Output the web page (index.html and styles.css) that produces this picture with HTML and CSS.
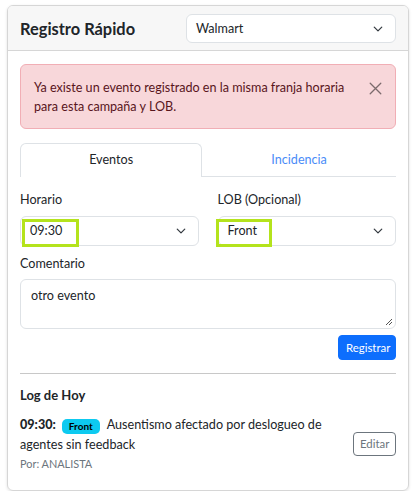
FILE: index.html
```html
<!DOCTYPE html>
<html lang="es">
<head>
<meta charset="utf-8">
<title>Registro Rápido</title>
<link rel="stylesheet" href="styles.css">
</head>
<body>
<div class="card">
  <div class="card-header">
    <h5 class="title">Registro Rápido</h5>
    <div class="select header-select">
      <span>Walmart</span>
      <svg class="chev" viewBox="0 0 16 16" width="12" height="12"><path d="M2 5l6 6 6-6" fill="none" stroke="#343a40" stroke-width="2" stroke-linecap="round" stroke-linejoin="round"/></svg>
    </div>
  </div>
  <div class="card-body">
    <div class="alert">
      <span class="alert-text">Ya existe un evento registrado en la misma franja horaria para esta campaña y LOB.</span>
      <svg class="close" viewBox="0 0 16 16" width="14" height="14"><path d="M1.5 1.5l13 13M14.5 1.5l-13 13" stroke="#000" stroke-width="1.6" stroke-linecap="round"/></svg>
    </div>

    <div class="tabs">
      <div class="tab active">Eventos</div>
      <div class="tab">Incidencia</div>
    </div>

    <div class="row">
      <div class="field">
        <label class="label">Horario</label>
        <div class="select-wrap">
          <div class="select">
            <span>09:30</span>
            <svg class="chev" viewBox="0 0 16 16" width="12" height="12"><path d="M2 5l6 6 6-6" fill="none" stroke="#343a40" stroke-width="2" stroke-linecap="round" stroke-linejoin="round"/></svg>
          </div>
          <span class="mark mark-time"></span>
        </div>
      </div>
      <div class="field">
        <label class="label">LOB (Opcional)</label>
        <div class="select-wrap">
          <div class="select">
            <span>Front</span>
            <svg class="chev" viewBox="0 0 16 16" width="12" height="12"><path d="M2 5l6 6 6-6" fill="none" stroke="#343a40" stroke-width="2" stroke-linecap="round" stroke-linejoin="round"/></svg>
          </div>
          <span class="mark mark-lob"></span>
        </div>
      </div>
    </div>

    <label class="label label-comment">Comentario</label>
    <div class="textarea">
      <span>otro evento</span>
      <svg class="grip" viewBox="0 0 8 8" width="8" height="8"><path d="M7 1L1 7M7 4L4 7" stroke="#555" stroke-width="1"/></svg>
    </div>

    <div class="actions">
      <button class="btn-primary">Registrar</button>
    </div>

    <div class="divider"></div>

    <div class="log-title">Log de Hoy</div>
    <div class="log-item">
      <div class="log-content">
        <div class="log-text"><strong class="log-time">09:30:</strong><span class="badge">Front</span>Ausentismo afectado por deslogueo de agentes sin feedback</div>
        <div class="log-by">Por: ANALISTA</div>
      </div>
      <button class="btn-outline">Editar</button>
    </div>
  </div>
</div>
</body>
</html>
```

FILE: styles.css
```css
* { box-sizing: border-box; }
html, body { margin: 0; padding: 0; background: #fff; }
body {
  font-family: Lato, "Noto Sans", sans-serif;
  font-size: 12.6px;
  line-height: 20px;
  color: #212529;
}
.card {
  margin: 5px 5px 0 7px;
  border: 1px solid #d6d6d6;
  border-radius: 6px;
  box-shadow: 0 1px 3px rgba(0,0,0,0.12);
  overflow: hidden;
}
.card-header {
  display: flex;
  align-items: center;
  justify-content: space-between;
  background: #f7f7f7;
  border-bottom: 1px solid #d6d6d6;
  padding: 8px 12px 7px 12px;
}
.title {
  margin: 0;
  font-size: 16.4px;
  font-weight: 700;
  line-height: 24px;
  color: #212529;
}
.select {
  display: flex;
  align-items: center;
  justify-content: space-between;
  height: 30px;
  border: 1px solid #dee2e6;
  border-radius: 6px;
  background: #fff;
  padding: 0 12px 0 9px;
}
.header-select { width: 210px; height: 29px; }
.chev { display: block; width: 10px; height: 10px; }
.card-body { padding: 13px 12px 18px 12px; }
.alert {
  display: flex;
  align-items: flex-start;
  justify-content: space-between;
  background: #f8d7da;
  border: 1px solid #f1aeb5;
  border-radius: 6px;
  color: #58151c;
  line-height: 19.2px;
  padding: 13px 12px 12px 13px;
}
.alert-text { flex: 1; padding-right: 8px; }
.close { flex: none; margin-top: 4px; margin-right: 1px; opacity: 0.5; width: 13px; height: 13px; }
.tabs {
  display: flex;
  margin-top: 14px;
  border-bottom: 1px solid #dee2e6;
}
.tab {
  flex: 1 1 auto;
  text-align: center;
  height: 34px;
  line-height: 32px;
  color: #4a8cf8;
  border: 1px solid transparent;
  border-bottom: none;
  border-top-left-radius: 6px;
  border-top-right-radius: 6px;
  margin-bottom: -1px;
}
.tab.active {
  color: #212529;
  border-color: #dee2e6;
  background: #fff;
}
.row {
  display: flex;
  gap: 19px;
  margin-top: 13px;
}
.field { flex: 1 1 0; min-width: 0; }
.label { display: block; margin-bottom: 6px; }
.select-wrap { position: relative; }
.mark {
  position: absolute;
  top: 3px;
  height: 28px;
  border: 3px solid #b4e31c;
  pointer-events: none;
}
.mark-time { left: 2px; width: 57px; }
.mark-lob { left: -2px; width: 56px; }
.label-comment { margin-top: 8px; margin-bottom: 5px; }
.textarea {
  position: relative;
  height: 50px;
  border: 1px solid #dee2e6;
  border-radius: 6px;
  padding: 6px 10px;
}
.grip { position: absolute; right: 2px; bottom: 2px; }
.actions {
  display: flex;
  justify-content: flex-end;
  margin-top: 6px;
}
.btn-primary {
  font-family: inherit;
  font-size: 11.4px;
  line-height: 17px;
  color: #fff;
  background: #0d6efd;
  border: 1px solid #0d6efd;
  border-radius: 4px;
  padding: 3px 7px;
  height: 25px;
  width: 58px;
}
.divider {
  margin-top: 13px;
  border-top: 1px solid #c8c8c8;
}
.log-title {
  margin-top: 11px;
  font-size: 13px;
  font-weight: 700;
}
.log-item {
  display: flex;
  align-items: center;
  justify-content: space-between;
  margin-top: 10px;
}
.log-content { flex: 1; padding-right: 12px; }
.log-text { line-height: 20px; }
.log-time { font-weight: 900; margin-right: 6px; }
.badge {
  display: inline-block;
  background: #0dcaf0;
  color: #000;
  font-size: 10px;
  font-weight: 700;
  line-height: 15px;
  padding: 0 7px;
  border-radius: 5px;
  vertical-align: middle;
  margin-right: 7px;
}
.log-by {
  margin-top: 1px;
  font-size: 10.9px;
  line-height: 16px;
  color: #6c757d;
}
.btn-outline {
  font-family: inherit;
  font-size: 11.4px;
  line-height: 16px;
  color: #6c757d;
  background: #fff;
  border: 1px solid #6c757d;
  border-radius: 4px;
  padding: 3px 6px;
  height: 24px;
  width: 43px;
}
```
